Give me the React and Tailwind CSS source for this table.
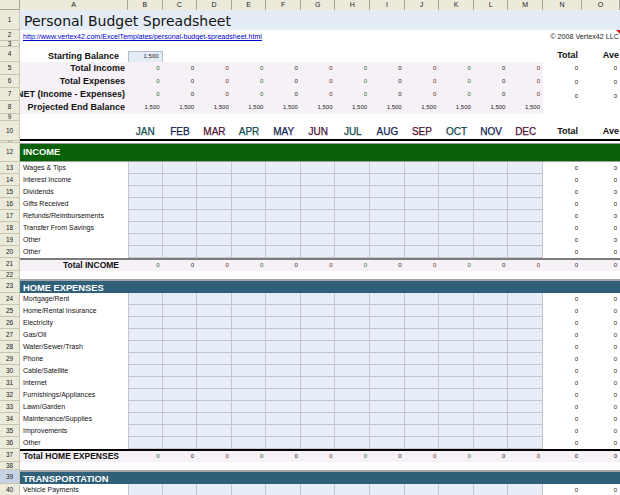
import React from 'react';

const AO = 'grid grid-cols-[108px_repeat(12,minmax(0,1fr))_39px_38px]';
const AM = 'grid grid-cols-[108px_repeat(12,minmax(0,1fr))]';

const LETTERS = ['A', 'B', 'C', 'D', 'E', 'F', 'G', 'H', 'I', 'J', 'K', 'L', 'M', 'N', 'O'];
const MONTHS = ['JAN', 'FEB', 'MAR', 'APR', 'MAY', 'JUN', 'JUL', 'AUG', 'SEP', 'OCT', 'NOV', 'DEC'];
// cleartype-ish tints the screenshot shows on the thin glyphs
const ZERO = ['text-[#2a682a]', 'text-[#1c1c1c]', 'text-[#7d2020]'];
const MONTH = ['text-[#0f4a4c]', 'text-[#121f52]', 'text-[#521236]'];

const income = ['Wages & Tips', 'Interest Income', 'Dividends', 'Gifts Received', 'Refunds/Reimbursements', 'Transfer From Savings', 'Other', 'Other'];
const home = ['Mortgage/Rent', 'Home/Rental Insurance', 'Electricity', 'Gas/Oil', 'Water/Sewer/Trash', 'Phone', 'Cable/Satellite', 'Internet', 'Furnishings/Appliances', 'Lawn/Garden', 'Maintenance/Supplies', 'Improvements', 'Other'];

function Row({ n, h, hl, className = '', children }) {
  return (
    <div className={`flex overflow-hidden ${h}`}>
      <div
        className={`w-[20px] shrink-0 flex items-center justify-center overflow-hidden border-r border-b border-[#c8c5b0] text-[6.5px] text-[#222] ${
          hl ? 'bg-[#c7d2e6]' : 'bg-[#ecebdb]'
        }`}
      >
        {n}
      </div>
      <div className={`flex-1 min-w-0 ${AO} ${className}`}>{children}</div>
    </div>
  );
}

function Val({ v = '0', cls = 'text-[#222]', pr = 'pr-[3px]' }) {
  return <div className={`flex items-center justify-end ${pr} text-[6px] ${cls}`}>{v}</div>;
}

function Bold({ children, pr = 'pr-[3px]', size = 'text-[9px]' }) {
  return (
    <div className={`flex items-center justify-end overflow-hidden whitespace-nowrap font-bold text-[#111] ${pr} ${size}`}>
      {children}
    </div>
  );
}

function SummaryRow({ n, label, last }) {
  return (
    <Row n={n} h="h-[13px]">
      <div className={`col-span-13 ${AM} bg-[#f6f1f6] ${last}`}>
        <Bold>{label}</Bold>
        {MONTHS.map((m, i) => (
          <Val key={m} cls={ZERO[i % 3]} />
        ))}
      </div>
      <Val pr="pr-[4px]" />
      <Val />
    </Row>
  );
}

function DataRow({ n, label, hl }) {
  return (
    <Row n={n} h="h-[12px]" hl={hl}>
      <div className="flex items-center pl-[3px] text-[7px] text-[#111] whitespace-nowrap overflow-hidden">{label}</div>
      {MONTHS.map((m, i) => (
        <div key={m} className={`bg-[#e7eef7] border-r border-b border-[#c5c6cf] ${i === 0 ? 'border-l' : ''}`} />
      ))}
      <Val pr="pr-[4px]" />
      <Val />
    </Row>
  );
}

function TotalRow({ n, label, line }) {
  return (
    <Row n={n} h="h-[13px]" className={`bg-[#f6f1f6] border-t-2 ${line}`}>
      <Bold pr="pr-[9px]" size="text-[8.5px]">{label}</Bold>
      {MONTHS.map((m, i) => (
        <Val key={m} cls={ZERO[i % 3]} />
      ))}
      <Val pr="pr-[4px]" />
      <Val />
    </Row>
  );
}

function Band({ n, h, hl, label, bg }) {
  return (
    <Row n={n} h={h} hl={hl}>
      <div className={`col-span-15 flex items-center pl-[3px] pt-[1px] text-[9.3px] font-bold text-white ${bg}`}>{label}</div>
    </Row>
  );
}

export default function App() {
  return (
    <div className="w-[620px] h-[495px] overflow-hidden bg-white font-['Liberation_Sans',Arial,sans-serif]">
      {/* column letters */}
      <div className="flex h-[10px]">
        <div className="w-[20px] shrink-0 bg-[#ecebdb] border-r border-b border-[#aaa792]" />
        <div className={`flex-1 ${AO}`}>
          {LETTERS.map((l) => (
            <div key={l} className="flex items-center justify-center bg-[#ecebdb] border-r border-b border-[#aaa792] text-[7px] text-[#222]">
              {l}
            </div>
          ))}
        </div>
      </div>

      <Row n="1" h="h-[20px]">
        <div className="col-span-15 flex items-center pl-[4px] pt-[1px] bg-[#e4ecf6] font-['DejaVu_Sans',sans-serif] text-[14px] text-[#141414]">
          Personal Budget Spreadsheet
        </div>
      </Row>

      <Row n="2" h="h-[11px]">
        <div className="col-span-15 relative flex items-center justify-between pl-[3px] pr-[1px] pt-[2px]">
          <span className="text-[7.1px] text-[#0000cc] underline whitespace-nowrap">
            http://www.vertex42.com/ExcelTemplates/personal-budget-spreadsheet.html
          </span>
          <span className="text-[7.2px] text-[#222] whitespace-nowrap">© 2008 Vertex42 LLC</span>
          <span className="absolute -top-[1px] right-0 w-0 h-0 border-l-[5px] border-l-transparent border-t-[5px] border-t-[#e01010]" />
        </div>
      </Row>

      <Row n="3" h="h-[6px]" />

      <Row n="4" h="h-[15px]">
        <div className="flex items-center justify-end pr-[9px] pt-[3px] font-bold text-[9px] text-[#111] whitespace-nowrap">
          Starting Balance
        </div>
        <div className="flex items-end pb-[1px]">
          <div className="w-full h-[12px] flex items-center justify-end pr-[3px] bg-[#e4ecf6] border border-[#b4bfcd] text-[6px] text-[#222]">
            1,500
          </div>
        </div>
        <div className="col-span-11" />
        <Bold pr="pr-[4px]" size="text-[9px]">Total</Bold>
        <Bold pr="pr-[1px]" size="text-[9px]">Ave</Bold>
      </Row>

      <SummaryRow n="5" label="Total Income" />
      <SummaryRow n="6" label="Total Expenses" last="border-b-2 border-[#333]" />
      <SummaryRow n="7" label="NET (Income - Expenses)" last="border-b-[3px] border-double border-[#333]" />

      <Row n="8" h="h-[13px]">
        <div className={`col-span-13 ${AM} bg-[#f6f1f6]`}>
          <Bold>Projected End Balance</Bold>
          {MONTHS.map((m) => (
            <Val key={m} v="1,500" />
          ))}
        </div>
      </Row>

      <Row n="9" h="h-[7px]" />

      <Row n="10" h="h-[20px]" className="border-b-2 border-black">
        <div />
        {MONTHS.map((m, i) => (
          <div key={m} className={`flex items-center justify-center pt-[3px] text-[10px] [-webkit-text-stroke:0.25px] ${MONTH[i % 3]}`}>
            {m}
          </div>
        ))}
        <div className="flex items-center justify-end pr-[4px] pt-[3px] font-bold text-[9px] text-[#111]">Total</div>
        <div className="flex items-center justify-end pr-[1px] pt-[3px] font-bold text-[9px] text-[#111]">Ave</div>
      </Row>

      <Row n="11" h="h-[2px]" />

      <Band n="12" h="h-[19px]" label="INCOME" bg="bg-[#0a6208] border-y border-[#9c9c9c]" />
      {income.map((l, i) => (
        <DataRow key={i} n={13 + i} label={l} />
      ))}
      <TotalRow n="21" label="Total INCOME" line="border-[#7c7c7c]" />

      <Row n="22" h="h-[8px]" />

      <Band n="23" h="h-[14px]" label="HOME EXPENSES" bg="bg-[#2f5f79] border-t-2 border-b border-[#a2a6aa]" />
      {home.map((l, i) => (
        <DataRow key={i} n={24 + i} label={l} />
      ))}
      <TotalRow n="37" label="Total HOME EXPENSES" line="border-black" />

      <Row n="38" h="h-[8px]" />

      <Band n="39" h="h-[14px]" hl label="TRANSPORTATION" bg="bg-[#2f5f79] border-t-2 border-b border-[#a2a6aa]" />
      <DataRow n="40" label="Vehicle Payments" />
    </div>
  );
}
